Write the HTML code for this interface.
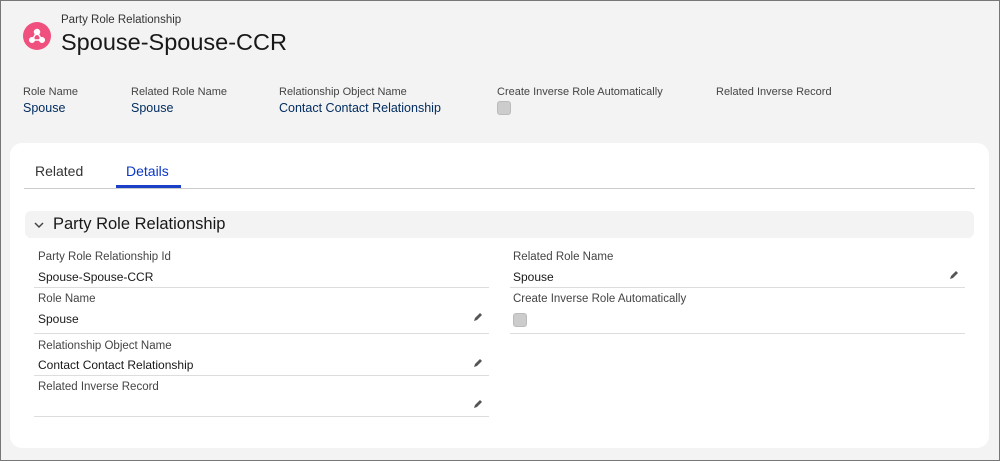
<!DOCTYPE html><html><head><style>
*{margin:0;padding:0;box-sizing:border-box}
body{width:1000px;height:461px;background:#f3f3f3;font-family:"Liberation Sans",sans-serif;position:relative;overflow:hidden;}
.frame{position:absolute;left:0;top:0;width:1000px;height:461px;border:1px solid #777;pointer-events:none}
.a{position:absolute}
.lbl{font-size:11px;color:#444}
.lbl2{font-size:11.5px;color:#444}
.val{font-size:12px;color:#181818}
.hv{font-size:12.5px;color:#032d60}
.line{position:absolute;height:1px;background:#ddd}
.pen{position:absolute;width:12px;height:12px}
</style></head><body>
<div class="a" style="left:23px;top:22px;width:28px;height:28px;border-radius:50%;background:#f0507e"></div>
<svg class="a" style="left:23px;top:22px" width="28" height="28" viewBox="0 0 28 28"><g fill="#fff" stroke="#fff" stroke-width="1.5"><circle cx="14" cy="10" r="2.5"/><circle cx="9" cy="18" r="2.3"/><circle cx="19" cy="18" r="2.3"/><line x1="14" y1="10" x2="9" y2="18"/><line x1="14" y1="10" x2="19" y2="18"/><line x1="9" y1="18" x2="19" y2="18"/></g></svg>
<div class="a" style="left:61px;top:14px;font-size:11.5px;color:#333">Party Role Relationship</div>
<div class="a" style="left:61px;top:29px;font-size:23.5px;color:#181818">Spouse-Spouse-CCR</div>
<div class="a lbl" style="left:23px;top:86px">Role Name</div><div class="a hv" style="left:23px;top:101px">Spouse</div>
<div class="a lbl" style="left:131px;top:86px">Related Role Name</div><div class="a hv" style="left:131px;top:101px">Spouse</div>
<div class="a lbl" style="left:279px;top:86px">Relationship Object Name</div><div class="a hv" style="left:279px;top:101px">Contact Contact Relationship</div>
<div class="a lbl" style="left:497px;top:86px">Create Inverse Role Automatically</div>
<div class="a" style="left:497px;top:101px;width:14px;height:14px;border-radius:3px;background:#ccc;border:1px solid #bbb"></div>
<div class="a lbl" style="left:716px;top:86px">Related Inverse Record</div>
<div class="a" style="left:10px;top:143px;width:979px;height:305px;background:#fff;border-radius:12px"></div>
<div class="a" style="left:35px;top:163px;font-size:14px;color:#333">Related</div>
<div class="a" style="left:126px;top:163px;font-size:14px;color:#0b37c8">Details</div>
<div class="a" style="left:116px;top:185px;width:65px;height:3px;background:#1b3fc7"></div>
<div class="line" style="left:24px;top:188px;width:951px;background:#ccc"></div>
<div class="a" style="left:25px;top:211px;width:949px;height:27px;background:#f3f3f3;border-radius:6px"></div>
<svg class="a" style="left:33px;top:220px" width="12" height="10" viewBox="0 0 12 10"><path d="M2 3l4 4 4-4" stroke="#444" stroke-width="1.5" fill="none"/></svg>
<div class="a" style="left:53px;top:215px;font-size:16.5px;color:#181818">Party Role Relationship</div>
<div class="a lbl2" style="left:38px;top:251px">Party Role Relationship Id</div><div class="a val" style="left:38px;top:270px">Spouse-Spouse-CCR</div>
<div class="line" style="left:34px;top:287px;width:455px"></div>
<div class="a lbl2" style="left:38px;top:293px">Role Name</div><div class="a val" style="left:38px;top:312px">Spouse</div>
<div class="line" style="left:34px;top:333px;width:455px"></div>
<div class="a lbl2" style="left:38px;top:340px">Relationship Object Name</div><div class="a val" style="left:38px;top:358px">Contact Contact Relationship</div>
<div class="line" style="left:34px;top:375px;width:455px"></div>
<div class="a lbl2" style="left:38px;top:381px">Related Inverse Record</div>
<div class="line" style="left:34px;top:416px;width:455px"></div>
<div class="a lbl2" style="left:513px;top:251px">Related Role Name</div><div class="a val" style="left:513px;top:270px">Spouse</div>
<div class="line" style="left:510px;top:287px;width:455px"></div>
<div class="a lbl2" style="left:513px;top:293px">Create Inverse Role Automatically</div>
<div class="a" style="left:513px;top:313px;width:14px;height:14px;border-radius:3px;background:#ccc;border:1px solid #bbb"></div>
<div class="line" style="left:510px;top:333px;width:455px"></div>
<svg class="pen" style="left:472px;top:311px" viewBox="0 0 12 12"><path d="M2 10l1-3 5-5 2 2-5 5z" fill="#555"/></svg>
<svg class="pen" style="left:472px;top:357px" viewBox="0 0 12 12"><path d="M2 10l1-3 5-5 2 2-5 5z" fill="#555"/></svg>
<svg class="pen" style="left:472px;top:398px" viewBox="0 0 12 12"><path d="M2 10l1-3 5-5 2 2-5 5z" fill="#555"/></svg>
<svg class="pen" style="left:948px;top:269px" viewBox="0 0 12 12"><path d="M2 10l1-3 5-5 2 2-5 5z" fill="#555"/></svg>
<div class="frame"></div>
</body></html>
